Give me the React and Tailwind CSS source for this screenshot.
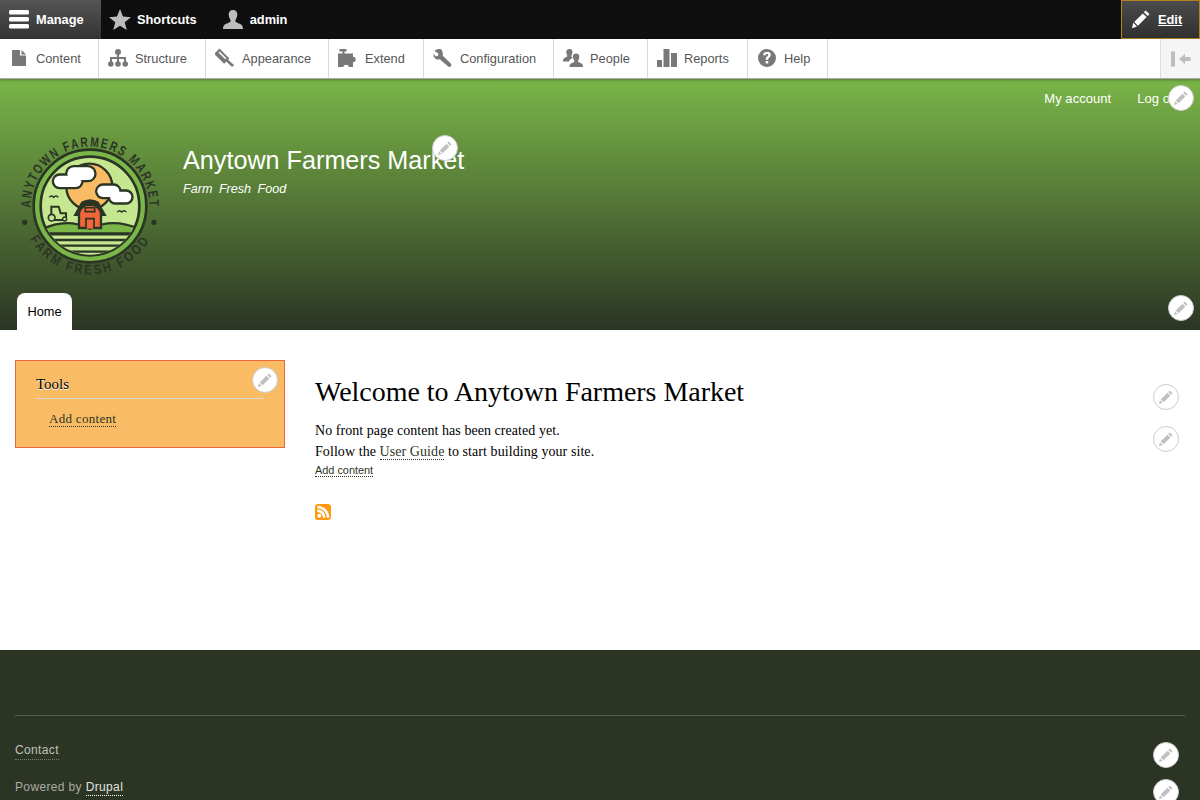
const Pencil = ({ className = "" }) => (
  <a className={`absolute w-[26px] h-[26px] rounded-full bg-white border border-[#ccc] flex items-center justify-center z-10 ${className}`}>
    <svg width="16" height="16" viewBox="0 0 16 16"><path fill="#c0c0c0" d="M11.6 1.4l3 2.900-1.400 1.500-3-2.900zM9.400 3.700l3 2.900-6.700 6.700-3-2.900zM1.900 11.200l2.900 2.800-3.800 1.100z" /></svg>
  </a>
);

const I = ({ children }) => (
  <svg width="20" height="20" viewBox="0 0 20 20" className="absolute top-[9px] left-[9px]" fill="#787878">{children}</svg>
);

const NAV = [
  ["Content", "w-[99px]", <><path d="M3 2h8v5.500h6V18H3z" /><path d="M12.500 2l4.500 4.500h-4.500z" /></>],
  ["Structure", "w-[107px]", <><circle cx="10" cy="4" r="3" /><path d="M9 5h2v4h7v5h-2v-3h-5v3H9v-3H4v3H2V9h7z" /><circle cx="2.800" cy="16" r="2.800" /><circle cx="10" cy="16" r="2.800" /><circle cx="17.200" cy="16" r="2.800" /></>],
  ["Appearance", "w-[123px]", <><g transform="rotate(45 7 8)"><rect x="0" y="4.500" width="14" height="7.500" /><rect x="2" y="6.500" width="10" height="1.500" fill="#fff" /></g><path d="M9.500 12l1.800-1.800 7.700 6.800-1.800 2z" /></>],
  ["Extend", "w-[95px]", <><path d="M1.500 1h7v2.500H6.500V5.500H15v3.300a2.600 2.600 0 1 1 0 5.400V19h-4a3 3 0 0 0-5.800 0H0V5.500h4.500V3.500h-3z" /></>],
  ["Configuration", "w-[130px]", <path d="M7.500 1C5 .6 2.800 1.400 1.500 3l4 2.600-.6 2.200-2.200.8L.6 5.500C0 8 1 10.400 3.400 11.300c1.200.4 2.400.3 3.400-.1l8.400 7.400c.9.700 2.100.4 2.700-.3.700-.9.500-2-.2-2.700L9.600 7.600c.4-1 .5-2.200 0-3.400C9.200 2.700 8.500 1.500 7.500 1z" />],
  ["People", "w-[94px]", <><path d="M6.500 1a3 3 0 0 1 3 3.200c0 1.800-1.100 3-1.100 4 0 .7.800 1.200 1.400 1.500-1.800.8-3.300 2-3.800 3.800H0c0-2.200.5-3.300 2.300-4 1.200-.5 2-.8 2-1.500 0-1-1-2-1-3.800a3 3 0 0 1 3.200-3.200z" /><path d="M13 5.500a3.300 3.300 0 0 1 3.300 3.500c0 2-1.200 3-1.200 4.200 0 .8 1 1.200 2.300 1.700 1.700.6 2.600 1.500 2.600 4.100H6.500c0-2.600.9-3.500 2.600-4.100 1.300-.5 2.300-.9 2.300-1.700 0-1.200-1.500-2.200-1.500-4.200A3.300 3.300 0 0 1 13 5.500z" /></>],
  ["Reports", "w-[100px]", <><path d="M0 12h5v7H0z" /><path d="M6.500 1h6v18h-6z" /><path d="M14 5h6v14h-6z" /></>],
  ["Help", "w-[80px]", <path fillRule="evenodd" d="M10 1a9 9 0 1 1 0 18 9 9 0 0 1 0-18zM10 3.800c-2.300 0-3.800 1.200-3.900 3.400h2.500c.1-.9.600-1.300 1.400-1.300.7 0 1.200.4 1.200 1 0 1.300-2.500 1.600-2.500 4.300v.5h2.500v-.4c0-1.600 2.600-1.900 2.600-4.500 0-2-1.700-3-3.800-3zM8.700 13v2.600h2.600V13z" />],
];

const D = "#2b3524";
const Logo = () => (
  <svg width="160" height="165" viewBox="0 0 480 495" className="block">
    <defs>
      <path id="arcTop" d="M240 436 A178 178 0 1 1 240 80 A178 178 0 1 1 240 436" />
      <path id="arcBot" d="M240 53 A205 205 0 0 0 240 463 A205 205 0 0 0 240 53" />
      <clipPath id="inner"><circle cx="240" cy="258" r="146" /></clipPath>
    </defs>
    <g fontFamily="'Liberation Sans', sans-serif" fontWeight="700" fill={D}>
      <text fontSize="41" letterSpacing="7" textAnchor="middle">
        <textPath href="#arcTop" startOffset="50%" textLength="570" lengthAdjust="spacingAndGlyphs">ANYTOWN FARMERS MARKET</textPath>
      </text>
      <text fontSize="41" letterSpacing="9" textAnchor="middle">
        <textPath href="#arcBot" startOffset="50%" textLength="440" lengthAdjust="spacingAndGlyphs">FARM FRESH FOOD</textPath>
      </text>
    </g>
    <circle cx="44" cy="307" r="8" fill={D} />
    <circle cx="432" cy="307" r="8" fill={D} />
    <circle cx="240" cy="258" r="169" fill="#7ab648" stroke={D} strokeWidth="8" />
    <circle cx="240" cy="258" r="148" fill="#c5e78f" stroke={D} strokeWidth="8" />
    <g clipPath="url(#inner)">
      <circle cx="238" cy="200" r="69" fill="#f9bc64" stroke={D} strokeWidth="7" />
      <rect x="80" y="326" width="320" height="100" fill="#c5e78f" />
      <path d="M96 328 Q170 292 240 326 Q310 292 390 328 L390 340 L96 340 Z" fill="#7ab648" stroke={D} strokeWidth="7" />
      <path d="M80 343H400M80 360H400M80 377H400M80 395H400" stroke={D} strokeWidth="7" fill="none" />
    </g>
    <path d="M207 270 L240 245 L273 270 L273 324 L207 324 Z" fill="#f0653a" stroke={D} strokeWidth="7" />
    <path d="M190 288 L214 245 Q240 230 266 245 L290 288 L274 288 L260 258 L220 258 L206 288 Z" fill={D} />
    <rect x="226" y="263" width="28" height="12" fill="none" stroke={D} strokeWidth="5" />
    <path d="M228 326 V296 H252 V326" fill="#f0653a" stroke={D} strokeWidth="5" />
    <g fill="#fff" stroke={D} strokeWidth="14">
      <rect x="172" y="142" width="81" height="38" rx="19" />
      <rect x="132" y="167" width="82" height="34" rx="17" />
      <rect x="262" y="197" width="66" height="34" rx="17" />
      <rect x="300" y="215" width="64" height="32" rx="16" />
    </g>
    <g fill="#fff">
      <rect x="172" y="142" width="81" height="38" rx="19" />
      <rect x="132" y="167" width="82" height="34" rx="17" />
      <rect x="262" y="197" width="66" height="34" rx="17" />
      <rect x="300" y="215" width="64" height="32" rx="16" />
    </g>
    <path d="M118 232 q7 -8 13 0 q7 -8 14 0 M322 276 q7 -8 13 0 q7 -8 14 0" fill="none" stroke={D} strokeWidth="4.500" />
    <path d="M124 284V260h22l6 20h16v20h-36" fill="none" stroke={D} strokeWidth="6" />
    <circle cx="125" cy="293" r="10" fill="#c5e78f" stroke={D} strokeWidth="5" />
    <circle cx="164" cy="297" r="6" fill="#c5e78f" stroke={D} strokeWidth="4" />
  </svg>
);

const dotted = "border-b border-dotted";

export default function App() {
  return (
    <div className="w-[1200px] h-[800px] overflow-hidden bg-white font-['Liberation_Serif',serif] text-[14px] text-black">
      {/* Toolbar */}
      <div className="h-[39px] bg-[#0f0f0f] flex font-['Liberation_Sans',sans-serif] text-[12.8px] font-bold text-white relative">
        <a className="relative w-[101px] pl-9 flex items-center bg-gradient-to-b from-[#555] to-[#333]">
          <svg width="20" height="20" viewBox="0 0 20 20" className="absolute left-[9px] top-[9px]" fill="#fff"><rect y="1" width="20" height="4.500" rx="1.500" /><rect y="8" width="20" height="4.500" rx="1.500" /><rect y="15" width="20" height="4.500" rx="1.500" /></svg>
          Manage
        </a>
        <a className="relative pl-9 pr-4 flex items-center">
          <svg width="22" height="22" viewBox="0 0 20 20" className="absolute left-[8px] top-[9px]" fill="#bdbdbd"><path d="M10 0l2.700 6.900 7.300.5-5.700 4.600 1.900 7.200L10 15.200l-6.200 4 1.900-7.200L0 7.400l7.300-.5z" /></svg>
          Shortcuts
        </a>
        <a className="relative pl-[37px] flex items-center">
          <svg width="20" height="20" viewBox="0 0 20 20" className="absolute left-[10px] top-[10px]" fill="#bdbdbd"><path d="M10 0c2.800 0 4.300 2 4.300 4.600 0 2.600-1.300 4.400-1.900 5.800-.3 1 .3 1.600 2.400 2.500 2.800 1.100 5.200 1.800 5.200 6.100H0c0-4.300 2.400-5 5.200-6.100 2.100-.9 2.700-1.500 2.400-2.500C7 9 5.700 7.200 5.700 4.600 5.700 2 7.200 0 10 0z" /></svg>
          admin
        </a>
        <a className="ml-auto relative w-[79px] pl-9 flex items-center border border-[#b5801f] bg-gradient-to-b from-[#4b4b4b] to-[#303030] underline">
          <svg width="20" height="20" viewBox="0 0 16 16" className="absolute left-[9px] top-[8px]" fill="#fff"><path d="M11.600 1.200l3.200 2.800-1.400 1.500-3.100-2.900zM9.400 3.500l3.100 2.900-6.900 6.900-3.100-3zM1.800 11l3 2.900-4 1.500z" /></svg>
          Edit
        </a>
      </div>
      {/* Tray */}
      <div className="relative z-20 h-[40px] bg-white border-b border-[#aaa] shadow-[0_1px_3px_rgba(0,0,0,0.35)] flex font-['Liberation_Sans',sans-serif] text-[12.8px] text-[#565656]">
        {NAV.map(([label, width, icon]) => (
          <a key={label} className={`relative pl-9 flex items-center border-r border-[#d9d9d9] ${width}`}>
            <I>{icon}</I>
            {label}
          </a>
        ))}
        <div className="ml-auto w-[40px] bg-[#f5f5f5] border-l border-[#ddd] flex items-center justify-center">
          <svg width="20" height="16" viewBox="0 0 20 16" fill="#bdbdbd"><rect x="0" y="0.500" width="4" height="15" /><path d="M8 8l6-5v3h5.500v4H14v3z" /></svg>
        </div>
      </div>
      {/* Header */}
      <header className="relative h-[251px] bg-linear-to-b/srgb from-[#7ab548] to-[#2b3524] font-['Liberation_Sans',sans-serif] text-white">
        <nav className="flex justify-end gap-[26px] pt-[12px] pr-[19px] text-[13px] h-[40px] leading-[15px] tracking-[0.05px]">
          <a>My account</a>
          <a>Log out</a>
        </nav>
        <Pencil className="right-[6px] top-[6px]" />
        <div className="flex pl-[10px] mt-[1px]">
          <Logo />
          <div className="ml-[13px]">
            <div className="relative text-[25.2px] leading-[30px] pt-[25px] whitespace-nowrap">
              Anytown Farmers Market
              <Pencil className="left-[249px] top-[15px]" />
            </div>
            <div className="italic text-[12.6px] leading-[16px] mt-[6px] [word-spacing:3px]">Farm Fresh Food</div>
          </div>
        </div>
        <a className="absolute left-[17px] bottom-0 w-[55px] h-[37px] bg-white rounded-t-[8px] text-black text-[12.8px] flex items-center justify-center">Home</a>
        <Pencil className="right-[6px] bottom-[9px]" />
      </header>
      {/* Main */}
      <main className="relative h-[320px] flex pt-[30px] pl-[15px]">
        <aside className="relative w-[270px] h-[88px] bg-[#f9bc64] border border-[#f0653a] px-[20px] pt-[13px]">
          <h2 className="text-[15px] leading-[20px] border-b border-[#d9d9d0] pb-[4px] [text-shadow:0_1px_0_#fff]">Tools</h2>
          <div className="pl-[13px] mt-[12px] text-[13px] leading-[15px] tracking-[0.3px] text-[#2b3524]">
            <a className={`${dotted} border-[#2b3524]`}>Add content</a>
          </div>
          <Pencil className="right-[6px] top-[6px]" />
        </aside>
        <section className="ml-[30px] flex-1">
          <h1 className="text-[28px] leading-[34px] mt-[15px] mb-[11px] font-normal tracking-[-0.03px]">Welcome to Anytown Farmers Market</h1>
          <p className="leading-[21px] tracking-[0.05px]">No front page content has been created yet.</p>
          <p className="leading-[21px] tracking-[0.07px]">Follow the <a className={`${dotted} border-[#2b3524] text-[#2b3524]`}>User Guide</a> to start building your site.</p>
          <div className="font-['Liberation_Sans',sans-serif] text-[10.9px] leading-[13px] mt-[2px] text-[#2b3524]">
            <a className={`${dotted} border-[#2b3524]`}>Add content</a>
          </div>
          <svg width="16" height="16" viewBox="0 0 16 16" className="mt-[27px]">
            <rect width="16" height="16" rx="3" fill="#ff9a0e" />
            <circle cx="4.300" cy="11.700" r="2" fill="#fff" />
            <path d="M2.300 6.700a7 7 0 0 1 7 7M2.300 2.900a10.800 10.800 0 0 1 10.800 10.800" stroke="#fff" strokeWidth="2.500" fill="none" />
          </svg>
        </section>
        <Pencil className="right-[21px] top-[54px]" />
        <Pencil className="right-[21px] top-[96px]" />
      </main>
      {/* Footer */}
      <footer className="relative h-[150px] bg-[#2c3424] px-[15px] pt-[65px] font-['Liberation_Sans',sans-serif] text-[12px] tracking-[0.36px] text-[#c0c2bc]">
        <div className="border-t border-[#565c50]" />
        <div className="mt-[27px] leading-[15px]"><a className={`${dotted} border-[#777c70] pb-[2px]`}>Contact</a></div>
        <div className="mt-[22px] leading-[15px] text-[#a9aca4]">Powered by <a className={`${dotted} border-white text-[#e4e4e0] pb-[1px]`}>Drupal</a></div>
        <Pencil className="right-[21px] top-[92px]" />
        <Pencil className="right-[21px] top-[129px]" />
      </footer>
    </div>
  );
}
